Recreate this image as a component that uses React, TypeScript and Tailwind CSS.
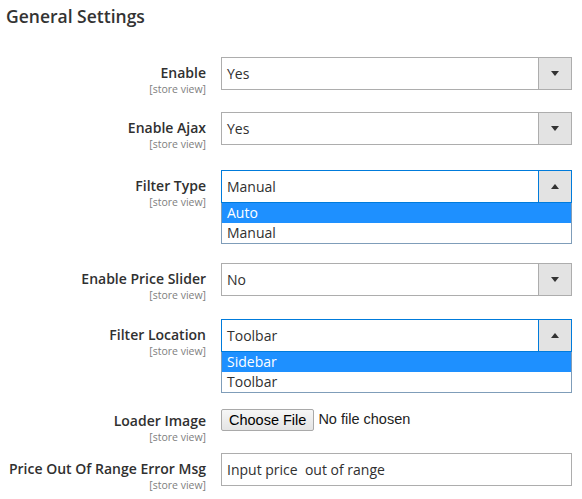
import React from 'react'

const FONT = { fontFamily: '"Open Sans", "Liberation Sans", sans-serif' }

function Label({ title, pt = 'pt-[6px]', h = 'h-[33px]' }: { title: string; pt?: string; h?: string }) {
  return (
    <div className={`w-[206px] shrink-0 text-right ${pt} ${h}`}>
      <div className="text-[14px] font-semibold leading-[20px] text-[#303030]">{title}</div>
      <div className="text-[10.5px] leading-[12px] text-[#808080]">[store view]</div>
    </div>
  )
}

function Arrow({ up }: { up?: boolean }) {
  return (
    <svg width="8" height="5" viewBox="0 0 8 5">
      {up ? <path d="M0 5 L4 0 L8 5 Z" fill="#333" /> : <path d="M0 0 L8 0 L4 5 Z" fill="#333" />}
    </svg>
  )
}

function Select({ value, options, selected }: { value: string; options?: string[]; selected?: string }) {
  const open = !!options
  return (
    <div className="w-[351px]">
      <div className={`flex h-[33px] border bg-white ${open ? 'border-[#007bdb]' : 'border-[#adadad]'}`}>
        <div className="flex-1 pl-[5px] text-[14px] leading-[31px] text-[#303030]">{value}</div>
        <div
          className={`flex w-[33px] items-center justify-center border-l bg-[#e3e3e3] ${open ? 'border-[#007bdb]' : 'border-[#adadad]'}`}
        >
          <Arrow up={open} />
        </div>
      </div>
      {open && (
        <div className="border border-t-0 border-[#7f9db9] bg-white">
          {options!.map((o) => (
            <div
              key={o}
              className={`h-[20px] pl-[5px] text-[14px] leading-[20px] ${o === selected ? 'bg-[#1e90ff] text-white' : 'text-[#303030]'}`}
            >
              {o}
            </div>
          ))}
        </div>
      )}
    </div>
  )
}

export default function App() {
  return (
    <div className="h-[499px] w-[582px] overflow-hidden bg-white" style={FONT}>
      <div className="pl-[6px] pt-[5px] text-[17.5px] font-semibold leading-[22px] text-[#333]">General Settings</div>

      <div className="mt-[30px] flex items-start">
        <Label title="Enable" />
        <div className="ml-[15px]">
          <Select value="Yes" />
        </div>
      </div>

      <div className="mt-[22px] flex items-start">
        <Label title="Enable Ajax" />
        <div className="ml-[15px]">
          <Select value="Yes" />
        </div>
      </div>

      <div className="mt-[25px] flex items-start">
        <Label title="Filter Type" />
        <div className="ml-[15px]">
          <Select value="Manual" options={['Auto', 'Manual']} selected="Auto" />
        </div>
      </div>

      <div className="mt-[19px] flex items-start">
        <Label title="Enable Price Slider" />
        <div className="ml-[15px]">
          <Select value="No" />
        </div>
      </div>

      <div className="mt-[23px] flex items-start">
        <Label title="Filter Location" />
        <div className="ml-[15px]">
          <Select value="Toolbar" options={['Sidebar', 'Toolbar']} selected="Sidebar" />
        </div>
      </div>

      <div className="mt-[16px] flex items-start">
        <Label title="Loader Image" pt="pt-[2px]" h="h-[22px]" />
        <div
          className="ml-[15px] flex items-center"
          style={{ fontFamily: '"Liberation Sans", Arial, sans-serif' }}
        >
          <button className="h-[22px] rounded-[2px] border border-[#a9a9a9] bg-gradient-to-b from-[#f6f6f6] to-[#e4e4e4] px-[7px] text-[14.5px] leading-[20px] text-black">
            Choose File
          </button>
          <span className="ml-[4px] text-[14.5px] text-[#222]">No file chosen</span>
        </div>
      </div>

      <div className="mt-[22px] flex items-start">
        <Label title="Price Out Of Range Error Msg" />
        <div className="ml-[15px]">
          <div className="h-[33px] w-[351px] border border-[#adadad] bg-white pl-[5px] text-[14px] leading-[31px] text-[#303030]">
            Input price&nbsp; out of range
          </div>
        </div>
      </div>
    </div>
  )
}
